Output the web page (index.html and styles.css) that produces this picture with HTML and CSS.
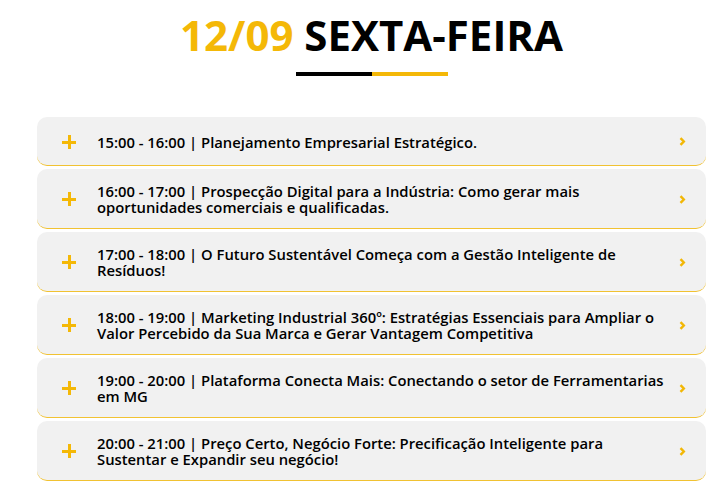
FILE: index.html
```html
<!DOCTYPE html>
<html lang="pt-BR">
<head>
<meta charset="utf-8">
<title>12/09 Sexta-feira</title>
<link rel="stylesheet" href="styles.css">
</head>
<body>
<main class="page">
  <header class="heading">
    <h1 class="title"><span class="date">12/09</span> SEXTA-FEIRA</h1>
    <div class="divider"><span class="divider-dark"></span><span class="divider-yellow"></span></div>
  </header>
  <section class="accordion">
    <div class="item">
      <span class="plus"></span>
      <span class="label">15:00 - 16:00 | Planejamento Empresarial Estratégico.</span>
      <svg class="chev" viewBox="0 0 7 9" width="7" height="9"><path d="M1.5 1.2 L4.8 4.5 L1.5 7.8" fill="none" stroke="#f2b705" stroke-width="2.4"/></svg>
    </div>
    <div class="item">
      <span class="plus"></span>
      <span class="label">16:00 - 17:00 | Prospecção Digital para a Indústria: Como gerar mais oportunidades comerciais e qualificadas.</span>
      <svg class="chev" viewBox="0 0 7 9" width="7" height="9"><path d="M1.5 1.2 L4.8 4.5 L1.5 7.8" fill="none" stroke="#f2b705" stroke-width="2.4"/></svg>
    </div>
    <div class="item">
      <span class="plus"></span>
      <span class="label">17:00 - 18:00 | O Futuro Sustentável Começa com a Gestão Inteligente de Resíduos!</span>
      <svg class="chev" viewBox="0 0 7 9" width="7" height="9"><path d="M1.5 1.2 L4.8 4.5 L1.5 7.8" fill="none" stroke="#f2b705" stroke-width="2.4"/></svg>
    </div>
    <div class="item">
      <span class="plus"></span>
      <span class="label">18:00 - 19:00 | Marketing Industrial 360º: Estratégias Essenciais para Ampliar o Valor Percebido da Sua Marca e Gerar Vantagem Competitiva</span>
      <svg class="chev" viewBox="0 0 7 9" width="7" height="9"><path d="M1.5 1.2 L4.8 4.5 L1.5 7.8" fill="none" stroke="#f2b705" stroke-width="2.4"/></svg>
    </div>
    <div class="item">
      <span class="plus"></span>
      <span class="label">19:00 - 20:00 | Plataforma Conecta Mais: Conectando o setor de Ferramentarias em MG</span>
      <svg class="chev" viewBox="0 0 7 9" width="7" height="9"><path d="M1.5 1.2 L4.8 4.5 L1.5 7.8" fill="none" stroke="#f2b705" stroke-width="2.4"/></svg>
    </div>
    <div class="item">
      <span class="plus"></span>
      <span class="label">20:00 - 21:00 | Preço Certo, Negócio Forte: Precificação Inteligente para Sustentar e Expandir seu negócio!</span>
      <svg class="chev" viewBox="0 0 7 9" width="7" height="9"><path d="M1.5 1.2 L4.8 4.5 L1.5 7.8" fill="none" stroke="#f2b705" stroke-width="2.4"/></svg>
    </div>
  </section>
</main>
</body>
</html>
```
FILE: styles.css
```css
html, body {
  margin: 0;
  padding: 0;
  background: #ffffff;
}
body {
  font-family: "Open Sans", "Noto Sans", sans-serif;
  color: #000;
}
.page {
  width: 669px;
  margin-left: 37px;
  padding-top: 7px;
}
.heading {
  display: flex;
  flex-direction: column;
  align-items: center;
}
.title {
  margin: 0;
  font-size: 42px;
  font-weight: 700;
  line-height: 56px;
  letter-spacing: 0;
  color: #000;
}
.date {
  color: #f4b807;
}
.divider {
  display: flex;
  margin-top: 9px;
  height: 4px;
}
.divider-dark {
  width: 76px;
  background: #000;
}
.divider-yellow {
  width: 76px;
  background: #f4b807;
}
.accordion {
  display: flex;
  flex-direction: column;
  gap: 3px;
  margin-top: 41px;
}
.item {
  display: flex;
  align-items: center;
  background: #f1f1f1;
  border-radius: 10px;
  border-bottom: 1px solid #f1c232;
  padding: 14px 20px 13px 25px;
  min-height: 21px;
}
.plus {
  position: relative;
  flex: 0 0 14px;
  width: 14px;
  height: 14px;
  margin-right: 21px;
}
.plus::before,
.plus::after {
  content: "";
  position: absolute;
  background: #f4b807;
}
.plus::before {
  left: 0;
  top: 6px;
  width: 14px;
  height: 3px;
}
.plus::after {
  left: 5.5px;
  top: 0;
  width: 3px;
  height: 14px;
}
.label {
  flex: 1;
  font-size: 14.8px;
  font-weight: 600;
  line-height: 16px;
  color: #000;
  padding-right: 6px;
}
.chev {
  flex: 0 0 7px;
}
```
